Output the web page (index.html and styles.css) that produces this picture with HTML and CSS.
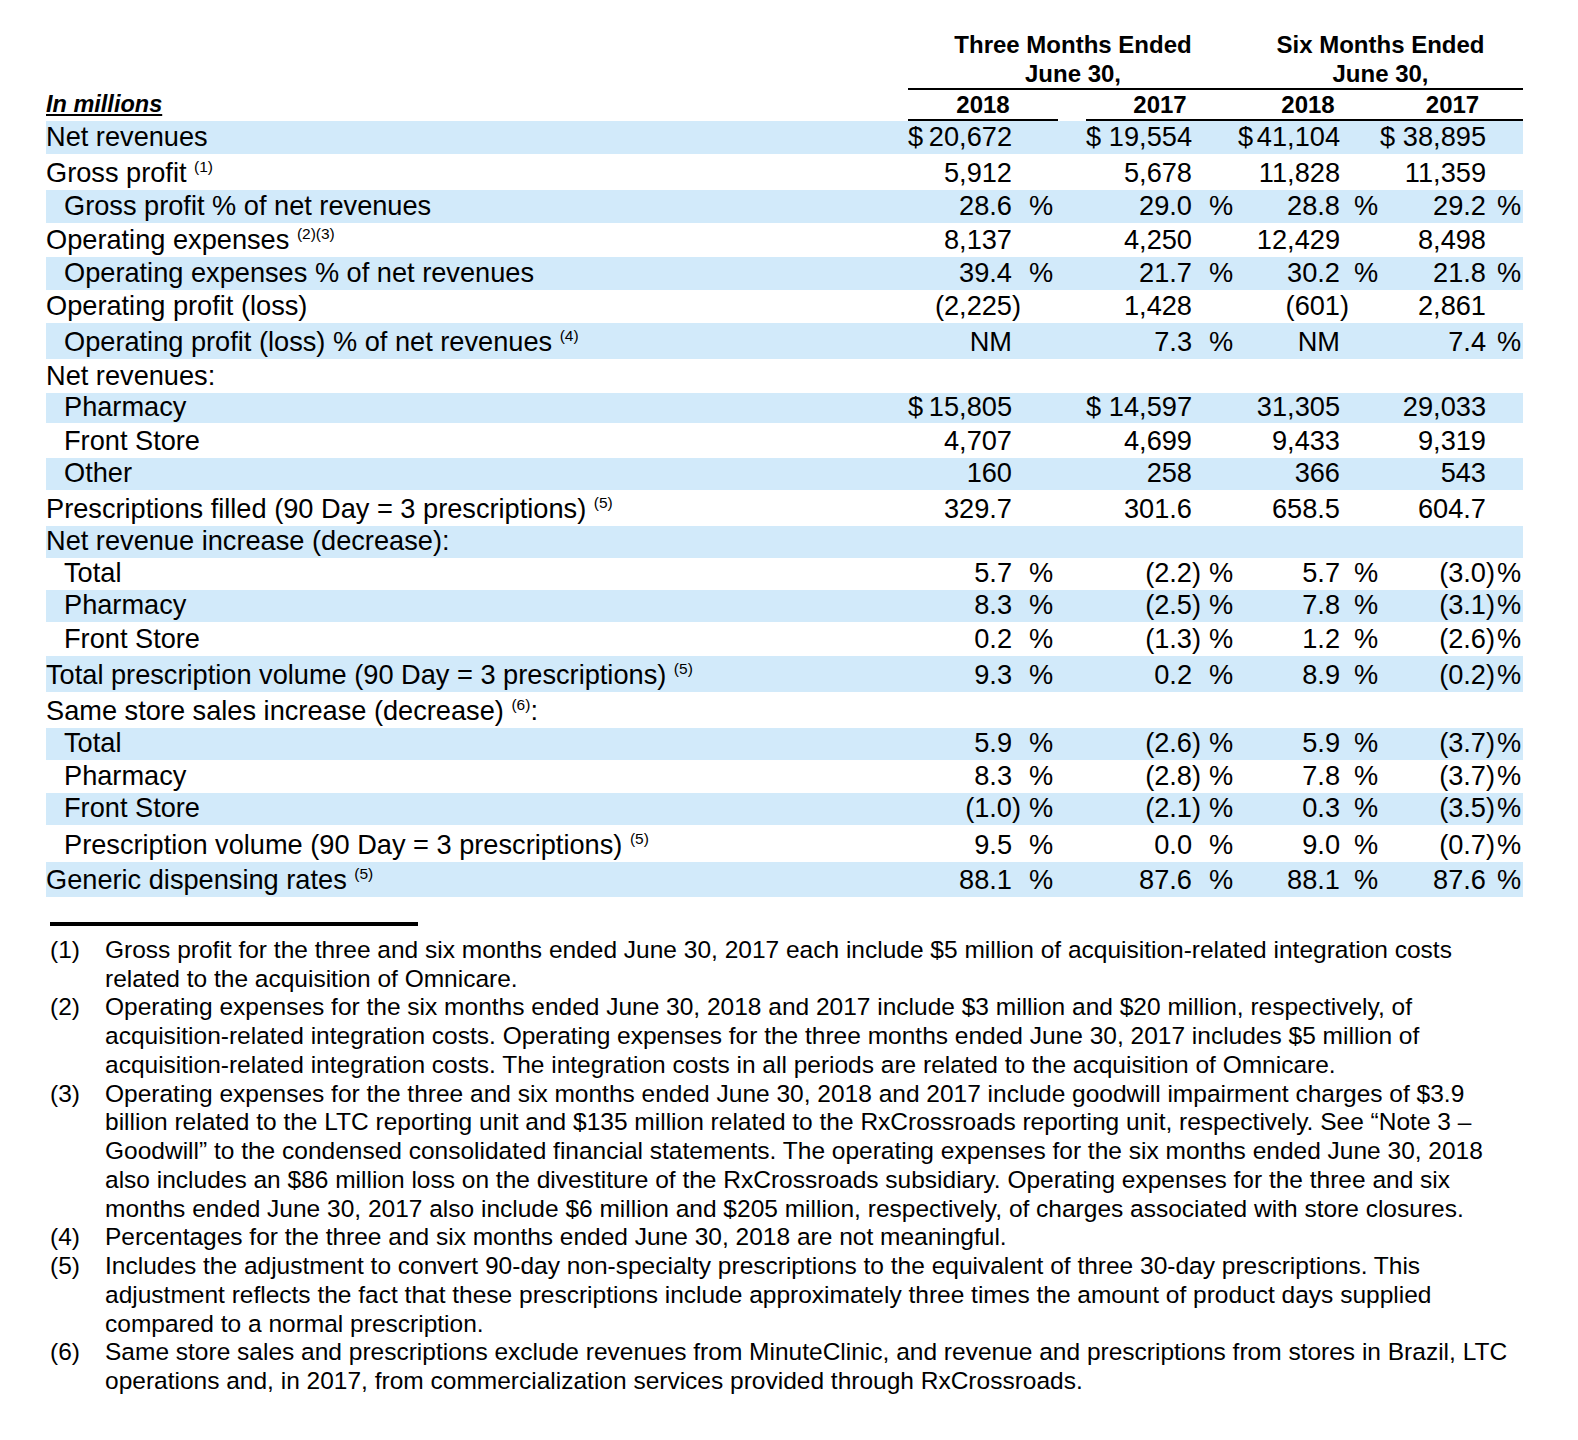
FILE: index.html
```html
<!DOCTYPE html>
<html lang="en">
<head>
<meta charset="utf-8">
<title>Results of Operations</title>
<link rel="stylesheet" href="styles.css">
</head>
<body>
<div class="page">
  <div class="hdr">
    <div></div>
    <div class="grp">Three Months Ended<br>June 30,</div>
    <div class="grp">Six Months Ended<br>June 30,</div>
  </div>
  <div class="years">
    <div class="unit">In millions</div>
    <div class="yr">2018</div>
    <div></div>
    <div class="yr">2017</div>
    <div class="yr">2018</div>
    <div class="yr">2017</div>
  </div>

  <div class="row band h33">
    <span class="lab">Net revenues</span>
    <span class="v c1"><span class="n d"><span>$</span><span>20,672</span></span></span>
    <span class="v c2"><span class="n d"><span>$</span><span>19,554</span></span></span>
    <span class="v c3"><span class="n d"><span>$</span><span>41,104</span></span></span>
    <span class="v c4"><span class="n d"><span>$</span><span>38,895</span></span></span>
  </div>
  <div class="row h36">
    <span class="lab">Gross profit <span class="sup">(1)</span></span>
    <span class="v c1"><span class="n">5,912</span></span>
    <span class="v c2"><span class="n">5,678</span></span>
    <span class="v c3"><span class="n">11,828</span></span>
    <span class="v c4"><span class="n">11,359</span></span>
  </div>
  <div class="row band h33">
    <span class="lab ind">Gross profit % of net revenues</span>
    <span class="v c1"><span class="n">28.6</span><span class="p"></span><span class="s">%</span></span>
    <span class="v c2"><span class="n">29.0</span><span class="p"></span><span class="s">%</span></span>
    <span class="v c3"><span class="n">28.8</span><span class="p"></span><span class="s">%</span></span>
    <span class="v c4"><span class="n">29.2</span><span class="p"></span><span class="s">%</span></span>
  </div>
  <div class="row h34">
    <span class="lab">Operating expenses <span class="sup">(2)(3)</span></span>
    <span class="v c1"><span class="n">8,137</span></span>
    <span class="v c2"><span class="n">4,250</span></span>
    <span class="v c3"><span class="n">12,429</span></span>
    <span class="v c4"><span class="n">8,498</span></span>
  </div>
  <div class="row band h33">
    <span class="lab ind">Operating expenses % of net revenues</span>
    <span class="v c1"><span class="n">39.4</span><span class="p"></span><span class="s">%</span></span>
    <span class="v c2"><span class="n">21.7</span><span class="p"></span><span class="s">%</span></span>
    <span class="v c3"><span class="n">30.2</span><span class="p"></span><span class="s">%</span></span>
    <span class="v c4"><span class="n">21.8</span><span class="p"></span><span class="s">%</span></span>
  </div>
  <div class="row h33">
    <span class="lab">Operating profit (loss)</span>
    <span class="v c1"><span class="n">(2,225</span><span class="p">)</span></span>
    <span class="v c2"><span class="n">1,428</span></span>
    <span class="v c3"><span class="n">(601</span><span class="p">)</span></span>
    <span class="v c4"><span class="n">2,861</span></span>
  </div>
  <div class="row band h36">
    <span class="lab ind">Operating profit (loss) % of net revenues <span class="sup">(4)</span></span>
    <span class="v c1"><span class="n">NM</span></span>
    <span class="v c2"><span class="n">7.3</span><span class="p"></span><span class="s">%</span></span>
    <span class="v c3"><span class="n">NM</span></span>
    <span class="v c4"><span class="n">7.4</span><span class="p"></span><span class="s">%</span></span>
  </div>
  <div class="row h34">
    <span class="lab">Net revenues:</span>
    <span class="v c1"></span>
    <span class="v c2"></span>
    <span class="v c3"></span>
    <span class="v c4"></span>
  </div>
  <div class="row band h30">
    <span class="lab ind">Pharmacy</span>
    <span class="v c1"><span class="n d"><span>$</span><span>15,805</span></span></span>
    <span class="v c2"><span class="n d"><span>$</span><span>14,597</span></span></span>
    <span class="v c3"><span class="n">31,305</span></span>
    <span class="v c4"><span class="n">29,033</span></span>
  </div>
  <div class="row h35">
    <span class="lab ind">Front Store</span>
    <span class="v c1"><span class="n">4,707</span></span>
    <span class="v c2"><span class="n">4,699</span></span>
    <span class="v c3"><span class="n">9,433</span></span>
    <span class="v c4"><span class="n">9,319</span></span>
  </div>
  <div class="row band h32">
    <span class="lab ind">Other</span>
    <span class="v c1"><span class="n">160</span></span>
    <span class="v c2"><span class="n">258</span></span>
    <span class="v c3"><span class="n">366</span></span>
    <span class="v c4"><span class="n">543</span></span>
  </div>
  <div class="row h36">
    <span class="lab">Prescriptions filled (90 Day = 3 prescriptions) <span class="sup">(5)</span></span>
    <span class="v c1"><span class="n">329.7</span></span>
    <span class="v c2"><span class="n">301.6</span></span>
    <span class="v c3"><span class="n">658.5</span></span>
    <span class="v c4"><span class="n">604.7</span></span>
  </div>
  <div class="row band h32">
    <span class="lab">Net revenue increase (decrease):</span>
    <span class="v c1"></span>
    <span class="v c2"></span>
    <span class="v c3"></span>
    <span class="v c4"></span>
  </div>
  <div class="row h32">
    <span class="lab ind">Total</span>
    <span class="v c1"><span class="n">5.7</span><span class="p"></span><span class="s">%</span></span>
    <span class="v c2"><span class="n">(2.2</span><span class="p">)</span><span class="s">%</span></span>
    <span class="v c3"><span class="n">5.7</span><span class="p"></span><span class="s">%</span></span>
    <span class="v c4"><span class="n">(3.0</span><span class="p">)</span><span class="s">%</span></span>
  </div>
  <div class="row band h32">
    <span class="lab ind">Pharmacy</span>
    <span class="v c1"><span class="n">8.3</span><span class="p"></span><span class="s">%</span></span>
    <span class="v c2"><span class="n">(2.5</span><span class="p">)</span><span class="s">%</span></span>
    <span class="v c3"><span class="n">7.8</span><span class="p"></span><span class="s">%</span></span>
    <span class="v c4"><span class="n">(3.1</span><span class="p">)</span><span class="s">%</span></span>
  </div>
  <div class="row h34">
    <span class="lab ind">Front Store</span>
    <span class="v c1"><span class="n">0.2</span><span class="p"></span><span class="s">%</span></span>
    <span class="v c2"><span class="n">(1.3</span><span class="p">)</span><span class="s">%</span></span>
    <span class="v c3"><span class="n">1.2</span><span class="p"></span><span class="s">%</span></span>
    <span class="v c4"><span class="n">(2.6</span><span class="p">)</span><span class="s">%</span></span>
  </div>
  <div class="row band h36">
    <span class="lab">Total prescription volume (90 Day = 3 prescriptions) <span class="sup">(5)</span></span>
    <span class="v c1"><span class="n">9.3</span><span class="p"></span><span class="s">%</span></span>
    <span class="v c2"><span class="n">0.2</span><span class="p"></span><span class="s">%</span></span>
    <span class="v c3"><span class="n">8.9</span><span class="p"></span><span class="s">%</span></span>
    <span class="v c4"><span class="n">(0.2</span><span class="p">)</span><span class="s">%</span></span>
  </div>
  <div class="row h36">
    <span class="lab">Same store sales increase (decrease) <span class="sup">(6)</span>:</span>
    <span class="v c1"></span>
    <span class="v c2"></span>
    <span class="v c3"></span>
    <span class="v c4"></span>
  </div>
  <div class="row band h32">
    <span class="lab ind">Total</span>
    <span class="v c1"><span class="n">5.9</span><span class="p"></span><span class="s">%</span></span>
    <span class="v c2"><span class="n">(2.6</span><span class="p">)</span><span class="s">%</span></span>
    <span class="v c3"><span class="n">5.9</span><span class="p"></span><span class="s">%</span></span>
    <span class="v c4"><span class="n">(3.7</span><span class="p">)</span><span class="s">%</span></span>
  </div>
  <div class="row h33">
    <span class="lab ind">Pharmacy</span>
    <span class="v c1"><span class="n">8.3</span><span class="p"></span><span class="s">%</span></span>
    <span class="v c2"><span class="n">(2.8</span><span class="p">)</span><span class="s">%</span></span>
    <span class="v c3"><span class="n">7.8</span><span class="p"></span><span class="s">%</span></span>
    <span class="v c4"><span class="n">(3.7</span><span class="p">)</span><span class="s">%</span></span>
  </div>
  <div class="row band h32">
    <span class="lab ind">Front Store</span>
    <span class="v c1"><span class="n">(1.0</span><span class="p">)</span><span class="s">%</span></span>
    <span class="v c2"><span class="n">(2.1</span><span class="p">)</span><span class="s">%</span></span>
    <span class="v c3"><span class="n">0.3</span><span class="p"></span><span class="s">%</span></span>
    <span class="v c4"><span class="n">(3.5</span><span class="p">)</span><span class="s">%</span></span>
  </div>
  <div class="row h37">
    <span class="lab ind">Prescription volume (90 Day = 3 prescriptions) <span class="sup">(5)</span></span>
    <span class="v c1"><span class="n">9.5</span><span class="p"></span><span class="s">%</span></span>
    <span class="v c2"><span class="n">0.0</span><span class="p"></span><span class="s">%</span></span>
    <span class="v c3"><span class="n">9.0</span><span class="p"></span><span class="s">%</span></span>
    <span class="v c4"><span class="n">(0.7</span><span class="p">)</span><span class="s">%</span></span>
  </div>
  <div class="row band h35">
    <span class="lab">Generic dispensing rates <span class="sup">(5)</span></span>
    <span class="v c1"><span class="n">88.1</span><span class="p"></span><span class="s">%</span></span>
    <span class="v c2"><span class="n">87.6</span><span class="p"></span><span class="s">%</span></span>
    <span class="v c3"><span class="n">88.1</span><span class="p"></span><span class="s">%</span></span>
    <span class="v c4"><span class="n">87.6</span><span class="p"></span><span class="s">%</span></span>
  </div>

  <div class="rule"></div>
  <div class="notes">
    <div class="nt"><span class="no">(1)</span><span class="tx">Gross profit for the three and six months ended June 30, 2017 each include $5 million of acquisition-related integration costs<br>related to the acquisition of Omnicare.</span></div>
    <div class="nt"><span class="no">(2)</span><span class="tx">Operating expenses for the six months ended June 30, 2018 and 2017 include $3 million and $20 million, respectively, of<br>acquisition-related integration costs. Operating expenses for the three months ended June 30, 2017 includes $5 million of<br>acquisition-related integration costs. The integration costs in all periods are related to the acquisition of Omnicare.</span></div>
    <div class="nt"><span class="no">(3)</span><span class="tx">Operating expenses for the three and six months ended June 30, 2018 and 2017 include goodwill impairment charges of $3.9<br>billion related to the LTC reporting unit and $135 million related to the RxCrossroads reporting unit, respectively. See “Note 3 –<br>Goodwill” to the condensed consolidated financial statements. The operating expenses for the six months ended June 30, 2018<br>also includes an $86 million loss on the divestiture of the RxCrossroads subsidiary. Operating expenses for the three and six<br>months ended June 30, 2017 also include $6 million and $205 million, respectively, of charges associated with store closures.</span></div>
    <div class="nt"><span class="no">(4)</span><span class="tx">Percentages for the three and six months ended June 30, 2018 are not meaningful.</span></div>
    <div class="nt"><span class="no">(5)</span><span class="tx">Includes the adjustment to convert 90-day non-specialty prescriptions to the equivalent of three 30-day prescriptions. This<br>adjustment reflects the fact that these prescriptions include approximately three times the amount of product days supplied<br>compared to a normal prescription.</span></div>
    <div class="nt"><span class="no">(6)</span><span class="tx">Same store sales and prescriptions exclude revenues from MinuteClinic, and revenue and prescriptions from stores in Brazil, LTC<br>operations and, in 2017, from commercialization services provided through RxCrossroads.</span></div>
  </div>
</div>
</body>
</html>
```

FILE: styles.css
```css
html, body {
  margin: 0;
  background: #ffffff;
}
body {
  font-family: "Liberation Sans", Arial, Helvetica, sans-serif;
  color: #000000;
}
.page {
  padding: 30px 0 40px 46px;
  width: 1477px;
}

/* column group header */
.hdr {
  display: grid;
  grid-template-columns: 862px 330px 285px;
  font-weight: bold;
  font-size: 24px;
  line-height: 29px;
}
.grp {
  text-align: center;
  border-bottom: 2px solid #000;
}

/* year header */
.years {
  display: grid;
  grid-template-columns: 862px 150px 28px 148px 148px 141px;
  font-weight: bold;
  font-size: 24px;
  line-height: 29px;
}
.yr {
  text-align: center;
  border-bottom: 2px solid #000;
}
.unit {
  font-style: italic;
  font-size: 23.5px;
  text-decoration: underline;
  text-decoration-thickness: 2px;
  text-underline-offset: 2px;
}

/* data rows */
.row {
  display: grid;
  grid-template-columns: 862px 178px 152px 142px 143px;
  align-items: end;
  font-size: 27.2px;
  line-height: 28px;
}
.row > * {
  padding-bottom: 3px;
}
.band { background: #d2eafa; }
.h30 { height: 30px; }
.h32 { height: 32px; }
.h33 { height: 33px; }
.h34 { height: 34px; }
.h35 { height: 35px; }
.h36 { height: 36px; }
.h37 { height: 37px; }

.lab { white-space: nowrap; }
.ind { padding-left: 18px; }
.sup {
  font-size: 15.5px;
  line-height: 0;
  vertical-align: super;
}

.v { display: grid; white-space: nowrap; }
.c1 { grid-template-columns: 104px 17px 57px; }
.c2 { grid-template-columns: 106px 17px 29px; }
.c3 { grid-template-columns: 102px 14px 26px; }
.c4 { grid-template-columns: 106px 11px 26px; }
.n {
  display: flex;
  justify-content: flex-end;
}
.d { justify-content: space-between; }

/* footnotes */
.rule {
  width: 368px;
  height: 4px;
  background: #000;
  margin: 25px 0 0 4px;
}
.notes {
  margin-top: 10px;
  font-size: 24.5px;
  line-height: 28.73px;
}
.nt {
  display: grid;
  grid-template-columns: 55px auto;
  padding-left: 4px;
  white-space: nowrap;
}
```
